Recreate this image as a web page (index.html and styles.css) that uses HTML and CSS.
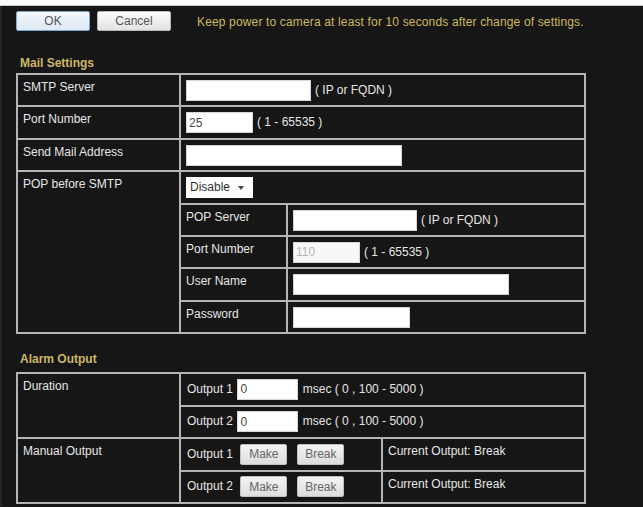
FILE: index.html
```html
<!DOCTYPE html>
<html lang="en">
<head>
    <meta charset="UTF-8">
    <title>Mail / Alarm Settings</title>
    <link rel="stylesheet" href="styles.css">
</head>
<body>
    <div class="topline"></div>
    <div class="page">
        <div class="actions">
            <button class="btn btn-ok">OK</button>
            <button class="btn">Cancel</button>
            <span class="notice">Keep power to camera at least for 10 seconds after change of settings.</span>
        </div>

        <!-- Mail settings -->
        <h2 class="section">Mail Settings</h2>
        <table class="grid mail">
            <colgroup>
                <col class="c-label">
                <col class="c-sub">
                <col>
            </colgroup>
            <tr>
                <td class="label">SMTP Server</td>
                <td colspan="2"><input class="txt w125" type="text"><span class="hint">( IP or FQDN )</span></td>
            </tr>
            <tr>
                <td class="label">Port Number</td>
                <td colspan="2"><input class="txt w67" type="text" value="25"><span class="hint">( 1 - 65535 )</span></td>
            </tr>
            <tr>
                <td class="label">Send Mail Address</td>
                <td colspan="2"><input class="txt w216" type="text"></td>
            </tr>
            <tr>
                <td class="label" rowspan="5">POP before SMTP</td>
                <td colspan="2"><div class="select">Disable <span class="arrow"></span></div></td>
            </tr>
            <tr>
                <td class="label">POP Server</td>
                <td><input class="txt w124" type="text"><span class="hint">( IP or FQDN )</span></td>
            </tr>
            <tr>
                <td class="label">Port Number</td>
                <td><input class="txt w67 off" type="text" value="110" disabled><span class="hint">( 1 - 65535 )</span></td>
            </tr>
            <tr>
                <td class="label">User Name</td>
                <td><input class="txt w216" type="text"></td>
            </tr>
            <tr>
                <td class="label">Password</td>
                <td><input class="txt w117" type="password"></td>
            </tr>
        </table>

        <!-- Alarm output -->
        <h2 class="section alarm-title">Alarm Output</h2>
        <table class="grid alarm">
            <colgroup>
                <col class="c-label">
                <col class="c-out">
                <col>
            </colgroup>
            <tr>
                <td class="label" rowspan="2">Duration</td>
                <td colspan="2" class="out">Output 1 <input class="txt w61" type="text" value="0"> msec ( 0 , 100 - 5000 )</td>
            </tr>
            <tr>
                <td colspan="2" class="out">Output 2 <input class="txt w61" type="text" value="0"> msec ( 0 , 100 - 5000 )</td>
            </tr>
            <tr>
                <td class="label" rowspan="2">Manual Output</td>
                <td class="out">Output 1 <button class="btn small">Make</button><button class="btn small">Break</button></td>
                <td class="label">Current Output: Break</td>
            </tr>
            <tr>
                <td class="out">Output 2 <button class="btn small">Make</button><button class="btn small">Break</button></td>
                <td class="label">Current Output: Break</td>
            </tr>
        </table>
    </div>
</body>
</html>
```

FILE: styles.css
```css
/* Camera setup page, dark theme */
body {
    margin: 0;
    background: #161616;
    font-family: "Liberation Sans", Arial, sans-serif;
    font-size: 12px;
    color: #e6e6e6;
}

.topline {
    height: 5px;
    background: #fafafa;
    border-bottom: 1px solid #c8c8c8;
}

.page {
    padding: 5px 0 0 16px;
    border-left: 2px solid #262626;
    min-height: 500px;
    box-sizing: border-box;
}

.actions {
    display: flex;
    align-items: center;
    height: 20px;
}

.btn {
    font-family: "Liberation Sans", Arial, sans-serif;
    font-size: 12px;
    color: #555;
    width: 74px;
    height: 20px;
    margin: 0 7px 0 0;
    padding: 0;
    border: 1px solid #b8b8b8;
    border-radius: 2px;
    background: linear-gradient(#fdfdfd, #e2e2e2);
}

.btn-ok {
    border-color: #7fa8d0;
    background: linear-gradient(#f2f7fc, #dde8f2);
    margin-left: -2px;
}

.notice {
    margin-left: 19px;
    color: #cdb95e;
    padding-top: 2px;
    letter-spacing: 0.15px;
}

.section {
    margin: 25px 0 2px 2px;
    font-size: 12px;
    font-weight: bold;
    color: #cdb665;
    line-height: 15px;
}

.alarm-title {
    margin: 18px 0 5px 2px;
}

.grid {
    width: 570px;
    margin-left: -2px;
    border-collapse: collapse;
    border: 2px solid #b4b4b4;
}

.grid td {
    border: 2px solid #b4b4b4;
    padding: 5px 5px 1px;
    line-height: 21px;
    vertical-align: top;
    white-space: nowrap;
}

.mail tr { height: 32.4px; }
.alarm tr { height: 32.5px; }

.grid td.label {
    line-height: 15px;
    padding-top: 5px;
}

.c-label { width: 163px; }
.c-sub { width: 107px; }
.c-out { width: 202px; }

.txt {
    box-sizing: border-box;
    height: 21px;
    border: 1px solid #d6d6d6;
    background: #fff;
    font-family: "Liberation Sans", Arial, sans-serif;
    font-size: 12px;
    color: #444;
    padding: 1px 2px;
    margin: 0;
    vertical-align: top;
}

.txt.off {
    color: #b5b5b5;
    background: #f8f8f8;
}

.w61 { width: 61px; }
.w67 { width: 67px; }
.w117 { width: 117px; }
.w124 { width: 124px; }
.w125 { width: 125px; }
.w216 { width: 216px; }

.hint {
    margin-left: 4px;
    vertical-align: top;
}

.select {
    display: inline-flex;
    align-items: center;
    box-sizing: border-box;
    width: 67px;
    height: 21px;
    padding-left: 4px;
    background: #fff;
    color: #333;
    vertical-align: top;
}

.arrow {
    margin-left: 8px;
    border-left: 3px solid transparent;
    border-right: 3px solid transparent;
    border-top: 4px solid #444;
}

.out {
    padding-left: 6px;
}

.alarm td.out {
    vertical-align: middle;
    padding: 2px 5px 2px 6px;
}

.out .txt {
    margin: 0 1px;
}

.btn.small {
    width: 47px;
    height: 21px;
    margin: 0 0 0 4px;
    vertical-align: top;
    background: linear-gradient(#f4f4f4, #dcdcdc);
    border-color: #c0c0c0;
    color: #666;
}

.btn.small + .btn.small {
    margin-left: 10px;
}
```
